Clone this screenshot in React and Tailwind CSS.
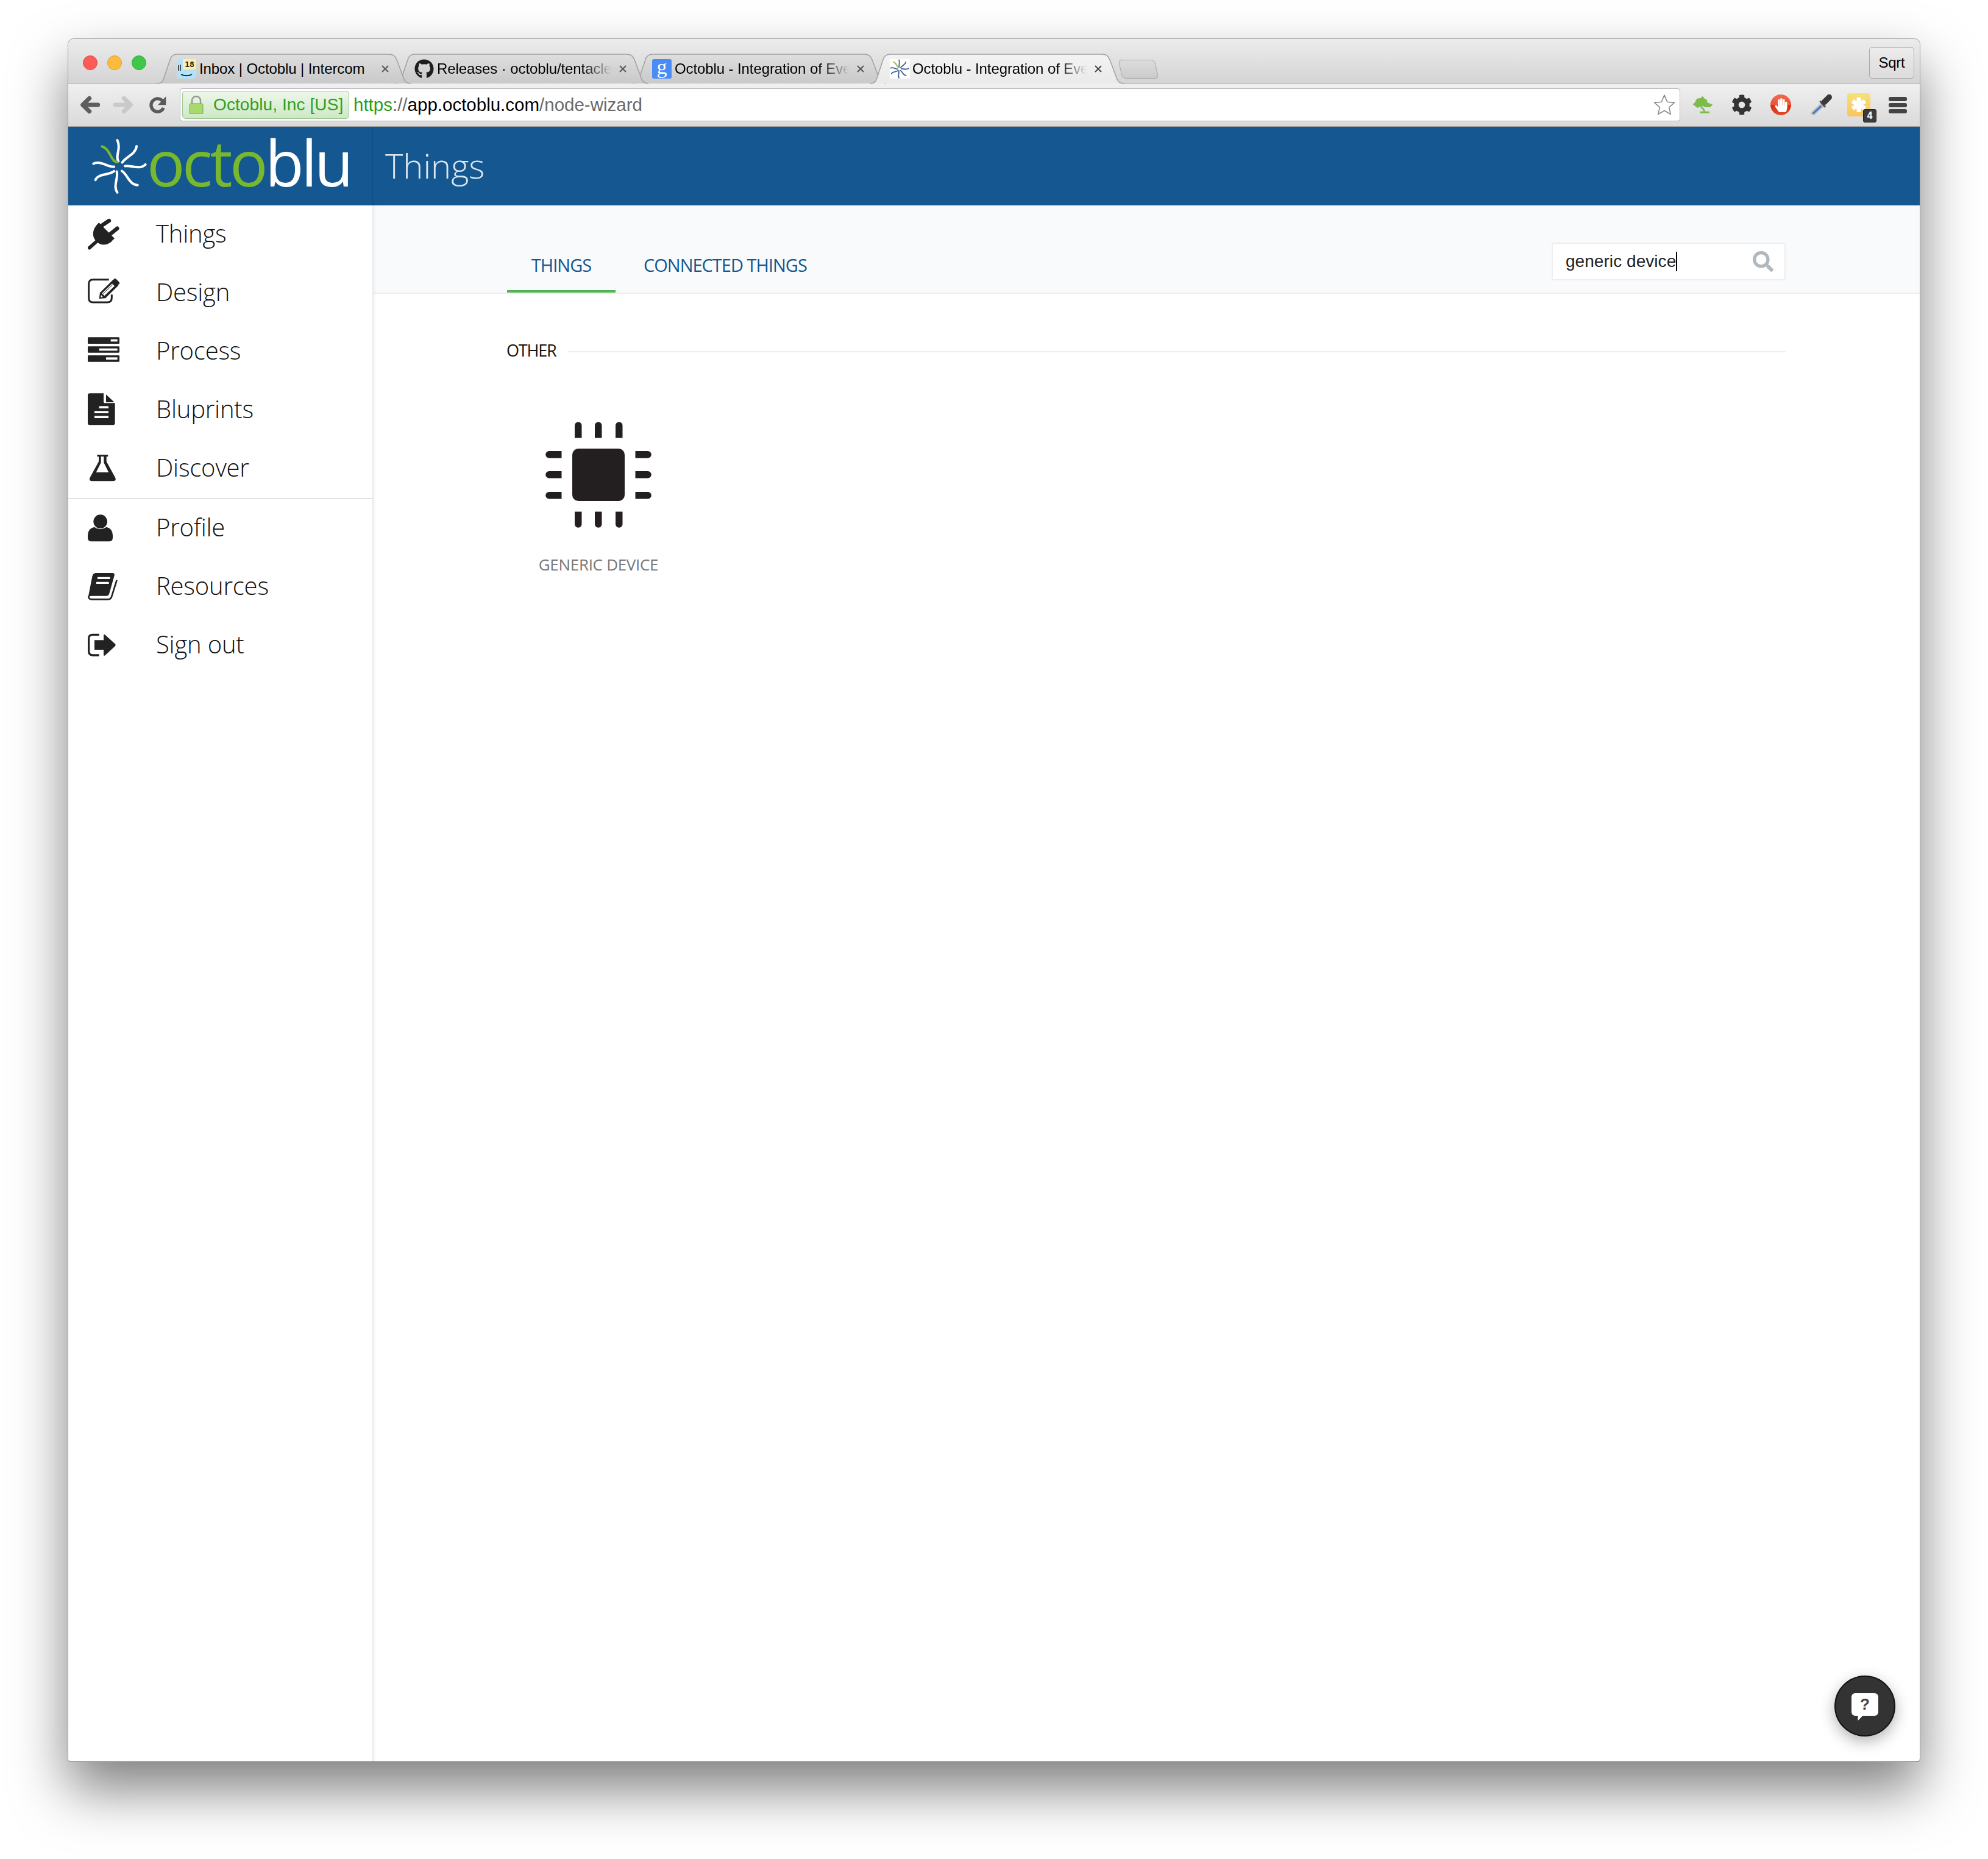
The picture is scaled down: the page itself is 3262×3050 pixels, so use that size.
import React from "react";
import { FaGithub, FaCog, FaHandPaper, FaSearch } from "react-icons/fa";

const INK = "#222222";

function Arms({ colorMain, colorAccent, w }) {
  const arms = [
    "M163 146 C146 120 178 85 158 42",
    "M182 152 C200 125 250 110 253 72",
    "M196 170 C225 165 270 190 297 162",
    "M180 194 C205 205 215 262 258 264",
    "M155 197 C165 225 135 270 158 300",
    "M142 195 C120 215 65 205 50 238",
    "M142 173 C115 178 75 140 40 158",
  ];
  return (
    <g fill="none" strokeLinecap="round">
      {arms.map((d) => (
        <path key={d} d={d} stroke={colorMain} strokeWidth={w} />
      ))}
      <path d="M158 150 C125 150 125 85 82 73" stroke={colorAccent} strokeWidth={w} />
    </g>
  );
}

function StarLogo() {
  return (
    <svg viewBox="30 30 280 280" className="w-[93px] h-[93px] shrink-0">
      <Arms colorMain="#ffffff" colorAccent="#77b82e" w={12} />
    </svg>
  );
}

function IntercomFav() {
  return (
    <div className="relative w-[32px] h-[32px] rounded-[5px] bg-[#b3e3fb]">
      <svg viewBox="0 0 32 32" className="w-[32px] h-[32px]">
        <path d="M3 10v9M6 9v10" stroke="#222" strokeWidth="1.5" />
        <path d="M7 25c5 3 13 3 18 0" stroke="#222" strokeWidth="1.8" fill="none" />
      </svg>
      <div className="absolute left-[10px] top-0 w-[22px] h-[17px] bg-[#fdeeaa] text-[13px] leading-[17px] font-bold text-center text-[#222] font-['DejaVu_Sans_Mono',monospace]">
        18
      </div>
    </div>
  );
}

function GoogleFav() {
  return (
    <div className="w-[32px] h-[32px] rounded-[3px] bg-[#4a8cf5] text-white text-[34px] leading-[26px] text-center font-['Liberation_Serif',serif]">
      g
    </div>
  );
}

function OctoFav() {
  return (
    <div className="w-[33px] h-[32px] bg-white">
      <svg viewBox="30 30 280 280" className="w-[33px] h-[32px]">
        <Arms colorMain="#3f5f96" colorAccent="#8dbb4a" w={16} />
      </svg>
    </div>
  );
}

function TabShape({ active, w }) {
  const d = `M0 49 C7 49 9 46 11 40 L21 10 C23 3 27 1 33 1 H${w - 36} C${w - 29} 1 ${w - 26} 3 ${w - 23} 10 L${w - 11} 42 C${w - 9} 47 ${w - 5} 49 ${w} 49`;
  return (
    <svg viewBox={`0 0 ${w} 50`} className="absolute inset-0 w-full h-full">
      <defs>
        <linearGradient id={active ? "tabA" : "tabI"} x1="0" x2="0" y1="0" y2="1">
          <stop offset="0" stopColor={active ? "#f3f3f3" : "#dedede"} />
          <stop offset="1" stopColor={active ? "#eaeaea" : "#c9c9c9"} />
        </linearGradient>
      </defs>
      <path d={d} fill={`url(#${active ? "tabA" : "tabI"})`} stroke="#a0a0a0" strokeWidth="1.5" />
    </svg>
  );
}

function Tab({ icon, title, fade, active, z, first }) {
  return (
    <div className={`relative w-[416px] h-[50px] shrink-0 ${first ? "" : "-ml-[26px]"} ${z}`}>
      <TabShape active={active} w={416} />
      <div className="relative flex items-center h-[49px] pl-[32px]">
        <div className="w-[33px] shrink-0 flex">{icon}</div>
        <div
          className={`ml-[4px] w-[287px] shrink-0 overflow-hidden whitespace-nowrap text-[24px] tracking-[-0.1px] text-black font-['Liberation_Sans',sans-serif] ${
            fade ? "[mask-image:linear-gradient(to_right,black_240px,transparent_287px)]" : ""
          }`}
        >
          {title}
        </div>
        <svg viewBox="0 0 14 14" className="w-[14px] h-[14px] ml-[11px] shrink-0">
          <path d="M2 2l10 10M12 2L2 12" stroke={active ? "#444" : "#555"} strokeWidth="2" />
        </svg>
      </div>
    </div>
  );
}

function Toolbar() {
  return (
    <div className="flex items-center h-[71px] bg-gradient-to-b from-[#f0f0f0] to-[#dadada] border-b border-[#a5a5a5] shrink-0">
      <svg viewBox="390 470 105 90" className="ml-[18px] w-[35px] h-[30px]">
        <path d="M482 515H408M440 483l-33 32 33 32" fill="none" stroke="#5e5e5e" strokeWidth="21" strokeLinecap="round" strokeLinejoin="round" />
      </svg>
      <svg viewBox="390 470 105 90" className="ml-[20px] w-[35px] h-[30px] -scale-x-100">
        <path d="M482 515H408M440 483l-33 32 33 32" fill="none" stroke="#c9c9c9" strokeWidth="21" strokeLinecap="round" strokeLinejoin="round" />
      </svg>
      <svg viewBox="735 470 90 90" className="ml-[24px] w-[30px] h-[30px]">
        <path d="M804 497A32 32 0 1 0 808 530" fill="none" stroke="#5a5a5a" strokeWidth="16" />
        <path d="M820 474V516H780Z" fill="#5a5a5a" />
      </svg>
      <div className="ml-[21px] w-[2462px] h-[54px] shrink-0 flex items-center bg-white rounded-[4px] border border-[#aeaeae] pl-[3px] pr-[6px]">
        <div className="flex items-center w-[274px] h-[46px] rounded-[5px] border border-[#9ac48f] bg-gradient-to-b from-[#eef7ea] to-[#cde8c5] pl-[10px] shrink-0">
          <svg viewBox="0 0 24 30" className="w-[24px] h-[30px] shrink-0">
            <path d="M5 14V8a7 7 0 0 1 14 0v6" fill="none" stroke="#9a9a9a" strokeWidth="2.5" />
            <rect x="1" y="13" width="22" height="17" rx="2" fill="#a6d96e" stroke="#7aa84c" />
          </svg>
          <span className="ml-[16px] text-[28px] tracking-[0.1px] text-[#2fa01d] whitespace-nowrap font-['Liberation_Sans',sans-serif]">
            Octoblu, Inc [US]
          </span>
        </div>
        <div className="ml-[7px] text-[29.5px] whitespace-nowrap text-[#6a6a6a] font-['Liberation_Sans',sans-serif]">
          <span className="text-[#27a015]">https</span>://<span className="text-black">app.octoblu.com</span>/node-wizard
        </div>
        <svg viewBox="0 0 24 24" className="ml-auto w-[38px] h-[38px]">
          <path d="M12 2l3 7 7.4.7-5.6 4.9 1.7 7.2L12 18l-6.5 3.8 1.7-7.2L1.6 9.7 9 9z" fill="#fff" stroke="#8a8a8a" strokeWidth="1" strokeLinejoin="round" />
        </svg>
      </div>
      <svg viewBox="38 28 102 90" className="ml-[20px] w-[34px] h-[30px]">
        <path d="M88 30L100 45 108 45 112 62 138 72 125 85 100 84 92 80 75 82 62 88 40 70 50 62 60 42 78 40Z" fill="#7fba4d" />
        <path d="M80 80C84 92 98 92 96 106" fill="none" stroke="#7fba4d" strokeWidth="8" />
        <rect x="75" y="105" width="47" height="10" rx="2" fill="#7fba4d" />
      </svg>
      <FaCog className="ml-[30px] w-[34px] h-[34px] text-[#333]" />
      <div className="ml-[30px] w-[34px] h-[34px] rounded-full flex items-center justify-center bg-[linear-gradient(#f2694f_0%,#ee5338_50%,#d5300f_51%,#e5492c_100%)]">
        <FaHandPaper className="w-[21px] h-[23px] text-white" />
      </div>
      <svg viewBox="610 20 115 108" className="ml-[30px] w-[38px] h-[36px]">
        <path d="M672 76L630 115" stroke="#bdbdbd" strokeWidth="22" strokeLinecap="round" />
        <path d="M666 82L630 115" stroke="#3c78d8" strokeWidth="9" strokeLinecap="round" />
        <path d="M665 58L686 82" stroke="#555" strokeWidth="10" strokeLinecap="round" />
        <path d="M684 60L708 36" stroke="#3a3a3a" strokeWidth="28" strokeLinecap="round" />
      </svg>
      <div className="relative ml-[24px] w-[38px] h-[38px] rounded-[4px] bg-gradient-to-b from-[#f5e27a] to-[#f9c45c] flex items-center justify-center">
        <svg viewBox="0 0 30 30" className="w-[30px] h-[30px]">
          <path d="M15 3v24M4.6 9l20.8 12M25.4 9L4.6 21" stroke="#fff" strokeWidth="7" />
        </svg>
        <div className="absolute left-[26px] top-[26px] w-[22px] h-[22px] rounded-[3px] bg-[#3c3c3c] border border-[#222] text-white text-[16px] leading-[20px] font-bold text-center font-['Liberation_Sans',sans-serif]">
          4
        </div>
      </div>
      <div className="ml-[30px] w-[30px] flex flex-col gap-[3px]">
        <div className="h-[7px] rounded-[3px] bg-[#444]" />
        <div className="h-[7px] rounded-[3px] bg-[#444]" />
        <div className="h-[7px] rounded-[3px] bg-[#444]" />
      </div>
    </div>
  );
}

function TabStrip() {
  return (
    <div className="flex items-start h-[73px] bg-gradient-to-b from-[#ececec] to-[#d4d4d4] border-b border-[#9a9a9a] shrink-0">
      <div className="flex items-center gap-[16px] pl-[24px] mt-[27px] shrink-0">
        <div className="w-[24px] h-[24px] rounded-full bg-[#fc5b57] border border-[#e2463f]" />
        <div className="w-[24px] h-[24px] rounded-full bg-[#fdbb3e] border border-[#e09e30]" />
        <div className="w-[24px] h-[24px] rounded-full bg-[#3ec748] border border-[#2dac38]" />
      </div>
      <div className="flex ml-[18px] mt-[24px] shrink-0">
        <Tab first z="z-30" icon={<IntercomFav />} title="Inbox | Octoblu | Intercom" />
        <Tab z="z-20" fade icon={<FaGithub className="w-[32px] h-[32px] text-[#1d1d1d]" />} title="Releases · octoblu/tentacle-firmata" />
        <Tab z="z-10" fade icon={<GoogleFav />} title="Octoblu - Integration of Everything" />
        <Tab z="z-40" fade active icon={<OctoFav />} title="Octoblu - Integration of Everything" />
        <div className="-ml-[6px] mt-[10px] w-[60px] h-[31px] rounded-[6px] [transform:skewX(12deg)] border border-[#a8a8a8] bg-gradient-to-b from-[#dcdcdc] to-[#cbcbcb] shrink-0" />
      </div>
      <div className="ml-auto mr-[9px] mt-[13px] w-[74px] h-[52px] rounded-[5px] border border-[#a9a9a9] bg-gradient-to-b from-[#ececec] to-[#dcdcdc] flex items-center justify-center text-[24px] tracking-[-0.3px] text-black font-['Liberation_Sans',sans-serif]">
        Sqrt
      </div>
    </div>
  );
}

const P = { fill: INK };

const navTop = [
  {
    label: "Things",
    vb: "102 45 180 180",
    icon: (
      <g>
        <path d="M157 76L234 154 224 163C204 190 166 190 146 170 116 140 128 102 157 76Z" {...P} />
        <path d="M168 88L210 60M208 132L250 98" stroke={INK} strokeWidth="19" strokeLinecap="round" transform="translate(-3 6)" />
        <path d="M146 168L110 200" stroke={INK} strokeWidth="17" strokeLinecap="round" />
      </g>
    ),
  },
  {
    label: "Design",
    vb: "102 333 180 180",
    icon: (
      <g>
        <path d="M206 356H128Q107 356 107 378V446Q107 468 128 468H198Q220 468 220 446V430" fill="none" stroke={INK} strokeWidth="9" />
        <path d="M158 450L162 421 226 358 253 385 189 448Z" {...P} stroke="#fff" strokeWidth="0" />
        <path d="M232 352L240 352 258 370 258 376 250 384 226 360Z" {...P} />
        <path d="M172 424L222 376 234 388 184 436ZM168 432L176 441 166 444Z" fill="#fff" />
        <path d="M178 425L226 380" stroke={INK} strokeWidth="3" />
      </g>
    ),
  },
  {
    label: "Process",
    vb: "102 621 180 180",
    icon: (
      <g>
        <rect x="102" y="640" width="156" height="32" rx="4" {...P} />
        <rect x="102" y="685" width="156" height="31" rx="4" {...P} />
        <rect x="102" y="729" width="156" height="32" rx="4" {...P} />
        <rect x="215" y="650" width="33" height="11" fill="#fff" />
        <rect x="158" y="695" width="90" height="11" fill="#fff" />
        <rect x="192" y="739" width="56" height="11" fill="#fff" />
      </g>
    ),
  },
  {
    label: "Bluprints",
    vb: "102 909 180 180",
    icon: (
      <g>
        <path d="M102 926Q102 916 112 916H180V956Q180 964 188 964H236V1062Q236 1072 226 1072H112Q102 1072 102 1062Z" {...P} />
        <path d="M192 922L233 960H192Z" {...P} />
        <rect x="158" y="979" width="46" height="11" fill="#fff" />
        <rect x="135" y="1003" width="69" height="11" fill="#fff" />
        <rect x="135" y="1027" width="69" height="11" fill="#fff" />
      </g>
    ),
  },
  {
    label: "Discover",
    vb: "102 -63 180 180",
    icon: (
      <path
        fillRule="evenodd"
        d="M148 -42H202V-33H194V-8L236 68Q246 88 226 88H124Q104 88 114 68L156 -8V-33H148ZM167 -33V-3L143 45H205L181 -3V-33Z"
        {...P}
      />
    ),
  },
];

const navBottom = [
  {
    label: "Profile",
    vb: "102 228 180 180",
    icon: (
      <g>
        <circle cx="164" cy="284" r="34" {...P} />
        <path d="M102 352Q102 318 134 311 164 332 194 311 225 318 225 352V364Q225 382 207 382H120Q102 382 102 364Z" {...P} />
      </g>
    ),
  },
  {
    label: "Resources",
    vb: "102 516 180 180",
    icon: (
      <g>
        <path d="M142 537H222Q236 537 233 550L208 638Q205 650 194 650H120Q110 650 104 657L124 555Q128 537 142 537Z" {...P} />
        <path d="M245 572L220 652Q216 667 202 667H122Q104 667 107 650" fill="none" stroke={INK} strokeWidth="8" />
        <path d="M150 562H212M144 586H206" stroke="#fff" strokeWidth="10" />
      </g>
    ),
  },
  {
    label: "Sign out",
    vb: "102 804 180 180",
    icon: (
      <g>
        <path d="M158 841H126Q107 841 107 860V922Q107 942 126 942H158" fill="none" stroke={INK} strokeWidth="10" />
        <path d="M135 868H180V844Q180 836 188 842L236 886Q242 892 236 898L188 942Q180 948 180 940V915H135Z" {...P} />
      </g>
    ),
  },
];

function NavItem({ item }) {
  return (
    <div className="flex items-center h-[96px]">
      <svg viewBox={item.vb} className="ml-[32px] w-[60px] h-[60px] shrink-0">
        {item.icon}
      </svg>
      <span className="ml-[52px] -mt-[4px] text-[40px] font-light tracking-[-0.2px] leading-none text-[#111] font-['Open_Sans',sans-serif]">
        {item.label}
      </span>
    </div>
  );
}

function Chip() {
  const v = [943, 976, 1010];
  const h = [739, 772, 806];
  return (
    <svg viewBox="895 691 174 174" className="w-[174px] h-[174px]">
      <rect x="939" y="735" width="86" height="86" rx="10" fill="#231f20" />
      {v.map((x) => (
        <path key={x} d={`M${x} 717.5V697a5.7 5.7 0 0 1 11.5 0V717.5Z`} fill="#231f20" />
      ))}
      {v.map((x) => (
        <path key={x} d={`M${x} 838.5V859a5.7 5.7 0 0 0 11.5 0V838.5Z`} fill="#231f20" />
      ))}
      {h.map((y) => (
        <path key={y} d={`M921.5 ${y}H901a5.7 5.7 0 0 0 0 11.5H921.5Z`} fill="#231f20" />
      ))}
      {h.map((y) => (
        <path key={y} d={`M1042.5 ${y}H1063a5.7 5.7 0 0 1 0 11.5H1042.5Z`} fill="#231f20" />
      ))}
    </svg>
  );
}

function Main() {
  return (
    <div className="relative flex-1 flex flex-col min-w-0">
      <div className="flex items-end justify-between h-[145px] bg-[#f9fafc] border-b-2 border-[#eeeeee] pl-[219px] pr-[220px] shrink-0">
        <div className="flex gap-[8px] font-['Open_Sans',sans-serif] text-[29px] font-medium tracking-[-1px] text-[#14568f]">
          <div className="h-[79px] w-[178px] flex items-start justify-center pt-[12px] border-b-[4px] border-[#4fb553]">THINGS</div>
          <div className="h-[79px] px-[38px] pt-[12px] whitespace-nowrap">CONNECTED THINGS</div>
        </div>
        <div className="mb-[20px] w-[384px] h-[62px] flex items-center bg-white border-2 border-[#eeeeee] rounded-[3px] pl-[21px] pr-[18px]">
          <span className="text-[28px] tracking-[0.05px] text-[#222] font-['Liberation_Sans',sans-serif]">generic device</span>
          <span className="w-[2px] h-[32px] bg-black" />
          <FaSearch className="ml-auto w-[34px] h-[34px] text-[#b0b7bd]" />
        </div>
      </div>
      <div className="pl-[218px] pr-[220px] font-['Open_Sans',sans-serif]">
        <div className="flex items-center mt-[75px] h-[40px]">
          <span className="-mt-[4px] text-[27px] font-medium tracking-[-1.2px] text-[#111]">OTHER</span>
          <div className="ml-[19px] flex-1 h-[2px] bg-[#eeeeee]" />
        </div>
        <div className="mt-[95px] ml-[1px] w-[300px] flex flex-col items-center">
          <Chip />
          <div className="mt-[42px] text-[26px] tracking-[-0.3px] leading-[36px] text-[#777777]">GENERIC DEVICE</div>
        </div>
      </div>
      <div className="absolute right-[40px] bottom-[41px] w-[100px] h-[100px] rounded-full bg-[#333333] border-2 border-[#111111] shadow-[0_8px_24px_rgba(0,0,0,0.3)] flex items-center justify-center">
        <div className="relative -mt-[6px] w-[44px] h-[37px] rounded-[6px] bg-white flex items-center justify-center text-[26px] font-bold leading-none text-[#444] font-['Liberation_Sans',sans-serif]">
          ?
          <svg viewBox="0 0 10 10" className="absolute left-[10px] top-[36px] w-[10px] h-[9px]">
            <path d="M0 0H10L0 10Z" fill="#fff" />
          </svg>
        </div>
      </div>
    </div>
  );
}

export default function App() {
  return (
    <div className="w-[3262px] h-[3050px] bg-white pt-[63px] pl-[111px] overflow-hidden">
      <div className="w-[3040px] h-[2828px] flex flex-col bg-white rounded-t-[10px] rounded-b-[6px] border border-[#a0a0a0] border-b-[#555555] overflow-hidden shadow-[0_45px_90px_rgba(0,0,0,0.5)]">
        <TabStrip />
        <Toolbar />
        <div className="flex items-center h-[129px] bg-[#155790] shrink-0">
          <div className="flex items-center w-[500px] h-full pl-[38px] border-r border-[#124d80] shrink-0">
            <StarLogo />
            <div className="text-[104px] leading-none font-normal tracking-[-4.5px] -ml-[2px] -mt-[14px] font-['Open_Sans',sans-serif] whitespace-nowrap">
              <span className="text-[#77b82e]">octo</span>
              <span className="text-white">blu</span>
            </div>
          </div>
          <div className="ml-[20px] -mt-[4px] text-[56px] font-light leading-none text-[#dce6ef] font-['Open_Sans',sans-serif]">Things</div>
        </div>
        <div className="flex flex-1 min-h-0">
          <aside className="relative z-10 w-[501px] shrink-0 bg-white border-r-2 border-[#eaeaea] shadow-[2px_0_5px_rgba(0,0,0,0.04)]">
            {navTop.map((n) => (
              <NavItem key={n.label} item={n} />
            ))}
            <div className="h-[2px] bg-[#e3e3e3]" />
            {navBottom.map((n) => (
              <NavItem key={n.label} item={n} />
            ))}
          </aside>
          <Main />
        </div>
      </div>
    </div>
  );
}
